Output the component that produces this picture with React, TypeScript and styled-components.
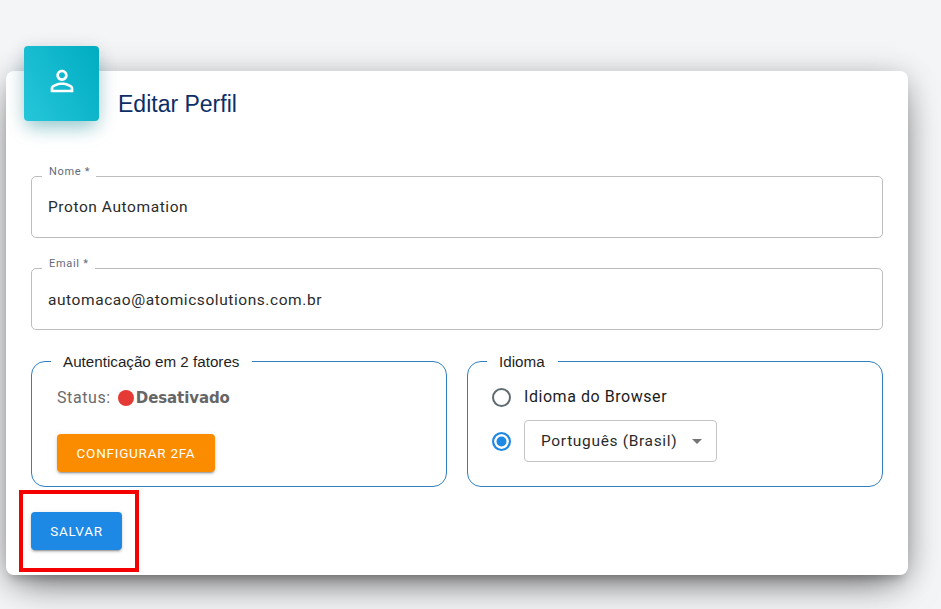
import React from 'react';
import styled, { createGlobalStyle } from 'styled-components';

const GlobalStyle = createGlobalStyle`
  html, body {
    margin: 0;
    padding: 0;
    background: #f4f5f7;
    overflow: hidden;
  }
`;

export default function App() {
  return (
    <Page>
      <GlobalStyle />
      <Card>
        <IconBadge>
          <svg width="34" height="34" viewBox="0 0 24 24" fill="#fff">
            <path d="M12 5.9c1.16 0 2.1.94 2.1 2.1s-.94 2.1-2.1 2.1S9.9 9.16 9.9 8s.94-2.1 2.1-2.1m0 9c2.97 0 6.1 1.46 6.1 2.1v1.1H5.9V17c0-.64 3.13-2.1 6.1-2.1M12 4C9.79 4 8 5.79 8 8s1.79 4 4 4 4-1.79 4-4-1.79-4-4-4zm0 9c-2.67 0-8 1.34-8 4v3h16v-3c0-2.66-5.33-4-8-4z" />
          </svg>
        </IconBadge>

        <Title>Editar Perfil</Title>

        <Form>
          <TextField>
            <FieldLegend>Nome *</FieldLegend>
            <FieldValue>Proton Automation</FieldValue>
          </TextField>

          <TextField>
            <FieldLegend>Email *</FieldLegend>
            <FieldValue>automacao@atomicsolutions.com.br</FieldValue>
          </TextField>

          <GroupRow>
            <Group>
              <GroupLegend>Autenticação em 2 fatores</GroupLegend>
              <StatusLine>
                Status:
                <StatusDot />
                <StatusText>Desativado</StatusText>
              </StatusLine>
              <ActionButton $color="#fb8c00" $width={158}>CONFIGURAR 2FA</ActionButton>
            </Group>

            <Group>
              <GroupLegend>Idioma</GroupLegend>
              <RadioRow>
                <Radio />
                <RadioLabel>Idioma do Browser</RadioLabel>
              </RadioRow>
              <RadioRow>
                <Radio $checked />
                <SelectBox>
                  Português (Brasil)
                  <SelectArrow />
                </SelectBox>
              </RadioRow>
            </Group>
          </GroupRow>

          <ActionButton $color="#1e88e5" $width={91}>SALVAR</ActionButton>
        </Form>

        <Highlight />
      </Card>
    </Page>
  );
}

const Page = styled.div`
  width: 941px;
  height: 609px;
  padding: 71px 0 0 6px;
  box-sizing: border-box;
`;

const Card = styled.div`
  position: relative;
  width: 902px;
  height: 504px;
  box-sizing: border-box;
  padding: 18px 25px 0;
  background: #fff;
  border-radius: 8px;
  box-shadow: 0 16px 38px -12px rgba(0, 0, 0, 0.56), 0 4px 30px 0 rgba(0, 0, 0, 0.2), 0 8px 10px -5px rgba(0, 0, 0, 0.2);
`;

const IconBadge = styled.div`
  position: absolute;
  left: 18px;
  top: -25px;
  width: 75px;
  height: 75px;
  padding-bottom: 6px;
  box-sizing: border-box;
  display: flex;
  align-items: center;
  justify-content: center;
  border-radius: 4px;
  background: linear-gradient(60deg, #26c6da, #00acc1);
  box-shadow: 0 4px 20px 0 rgba(0, 0, 0, 0.14), 0 10px 18px -4px rgba(0, 172, 193, 0.35);
`;

const Title = styled.h2`
  margin: 0 0 0 87px;
  font: 400 23px/30px "Liberation Sans", Arial, sans-serif;
  color: #0b2e66;
`;

const Form = styled.div`
  display: flex;
  flex-direction: column;
  margin-top: 46.5px;
`;

const TextField = styled.fieldset`
  height: 72px;
  margin: 0 0 20.5px;
  padding: 0 16px;
  box-sizing: border-box;
  border: 1px solid #bdbdbd;
  border-radius: 5px;
  min-width: 0;
`;

const FieldLegend = styled.legend`
  margin-left: -6px;
  padding: 0 6px 10px 7px;
  font: 400 11px/11px Roboto, sans-serif;
  letter-spacing: 0.7px;
  color: #5f6b7a;
`;

const FieldValue = styled.div`
  margin-top: 10.5px;
  font: 400 15.5px/20px Roboto, sans-serif;
  letter-spacing: 0.57px;
  color: #2b2b2b;
`;

const GroupRow = styled.div`
  display: grid;
  grid-template-columns: 416px 416px;
  column-gap: 20px;
  margin-bottom: 25px;
`;

const Group = styled.fieldset`
  height: 134px;
  margin: 2.5px 0 0;
  padding: 14px 25px 0;
  box-sizing: border-box;
  border: 1px solid #2f7fc1;
  border-radius: 14px;
  min-width: 0;
`;

const GroupLegend = styled.legend`
  margin-left: -6px;
  padding: 0 13px 0 12px;
  font: 400 15.2px/17px "Liberation Sans", Arial, sans-serif;
  color: #1f1f1f;
`;

const StatusLine = styled.div`
  display: flex;
  align-items: center;
  height: 24px;
  margin: 2px 0 24px;
  font: 400 16px/24px Roboto, sans-serif;
  letter-spacing: 0.6px;
  color: #6b6b6b;
`;

const StatusDot = styled.span`
  width: 16px;
  height: 16px;
  margin: 0 2px 0 7px;
  border-radius: 50%;
  background: #e53935;
`;

const StatusText = styled.span`
  font: 700 15px/24px "DejaVu Sans", sans-serif;
  letter-spacing: -0.1px;
  color: #666;
`;

const ActionButton = styled.button<{ $color: string; $width: number }>`
  width: ${(p) => p.$width}px;
  height: 38px;
  padding: 0;
  border: none;
  border-radius: 4px;
  background: ${(p) => p.$color};
  color: #fff;
  font: 400 13.5px/38px Roboto, sans-serif;
  letter-spacing: 0.75px;
  box-shadow: 0 3px 1px -2px rgba(0, 0, 0, 0.2), 0 2px 2px 0 rgba(0, 0, 0, 0.14), 0 1px 5px 0 rgba(0, 0, 0, 0.12);
`;

const RadioRow = styled.div`
  display: flex;
  align-items: center;
  gap: 13px;
  min-height: 24px;
  margin: 1px 0 11px -1px;
`;

const Radio = styled.span<{ $checked?: boolean }>`
  width: 19px;
  height: 19px;
  box-sizing: border-box;
  border-radius: 50%;
  border: 2px solid ${(p) => (p.$checked ? '#1e88e5' : '#5f6b73')};
  background: ${(p) => (p.$checked ? '#1e88e5' : 'transparent')};
  box-shadow: ${(p) => (p.$checked ? 'inset 0 0 0 2.5px #fff' : 'none')};
  flex-shrink: 0;
`;

const RadioLabel = styled.span`
  font: 400 16px/24px Roboto, sans-serif;
  letter-spacing: 0.55px;
  color: #1c1c1c;
`;

const SelectBox = styled.div`
  display: flex;
  align-items: center;
  width: 193px;
  height: 42px;
  padding-left: 16px;
  box-sizing: border-box;
  border: 1px solid #c4c4c4;
  border-radius: 4px;
  font: 400 15.5px/20px Roboto, sans-serif;
  letter-spacing: 0.66px;
  color: #2b2b2b;
`;

const SelectArrow = styled.span`
  margin-left: 15px;
  width: 0;
  height: 0;
  border-left: 5px solid transparent;
  border-right: 5px solid transparent;
  border-top: 5px solid #757575;
`;

const Highlight = styled.div`
  position: absolute;
  left: 13px;
  top: 419px;
  width: 120px;
  height: 82px;
  box-sizing: border-box;
  border: 4px solid #f40000;
  pointer-events: none;
`;
